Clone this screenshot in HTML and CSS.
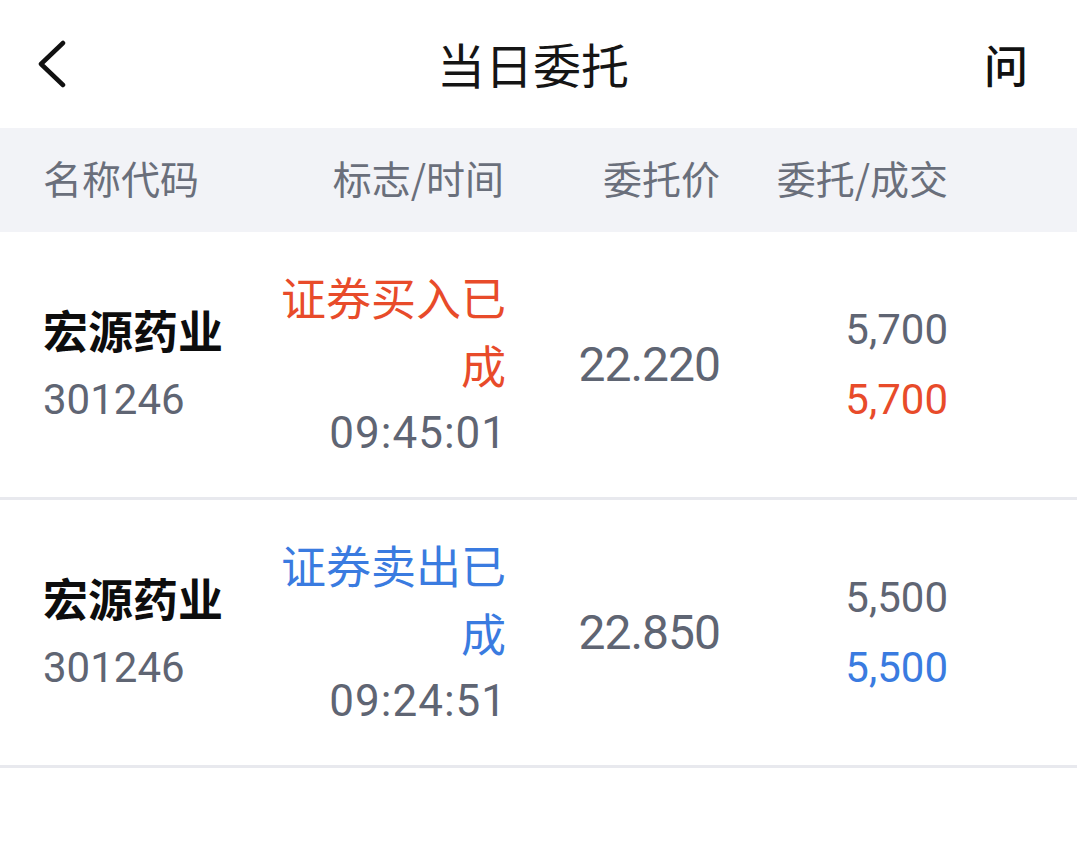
FILE: index.html
```html
<!DOCTYPE html>
<html lang="zh-CN">
<head>
<meta charset="utf-8">
<title>当日委托</title>
<link rel="stylesheet" href="styles.css">
</head>
<body>
<div class="page">
  <header class="topbar">
    <div class="back">
      <svg width="30" height="48" viewBox="0 0 30 48"><path d="M25 3 L3 24 L25 45" fill="none" stroke="#111" stroke-width="4.5" stroke-linecap="round" stroke-linejoin="round"/></svg>
    </div>
    <div class="title">当日委托</div>
    <div class="help">问</div>
  </header>
  <div class="thead">
    <div class="c1">名称代码</div>
    <div class="c2">标志/时间</div>
    <div class="c3">委托价</div>
    <div class="c4">委托/成交</div>
  </div>
  <div class="row">
    <div class="c1 namecell">
      <div class="name">宏源药业</div>
      <div class="code">301246</div>
    </div>
    <div class="c2 statuscell">
      <div class="status buy">证券买入已成</div>
      <div class="time">09:45:01</div>
    </div>
    <div class="c3 price">22.220</div>
    <div class="c4 qtycell">
      <div class="qty">5,700</div>
      <div class="qty buy">5,700</div>
    </div>
  </div>
  <div class="row">
    <div class="c1 namecell">
      <div class="name">宏源药业</div>
      <div class="code">301246</div>
    </div>
    <div class="c2 statuscell">
      <div class="status sell">证券卖出已成</div>
      <div class="time">09:24:51</div>
    </div>
    <div class="c3 price">22.850</div>
    <div class="c4 qtycell">
      <div class="qty">5,500</div>
      <div class="qty sell">5,500</div>
    </div>
  </div>
</div>
</body>
</html>
```

FILE: styles.css
```css
* { box-sizing: border-box; margin: 0; padding: 0; }
html, body { background: #fff; }
body {
  font-family: Roboto, "Noto Sans CJK SC", sans-serif;
  color: #111;
  width: 1077px;
}
.topbar {
  height: 128px;
  display: grid;
  grid-template-columns: 1fr auto 1fr;
  align-items: center;
  padding: 0 49px 0 38px;
}
.back { display: flex; align-items: center; }
.back svg { display: block; }
.title {
  font-family: "Noto Sans CJK SC", sans-serif;
  font-size: 48px;
  line-height: 60px;
  color: #151515;
  font-weight: 400;
  padding-bottom: 2px;
}
.help {
  justify-self: end;
  font-family: "Noto Sans CJK SC", sans-serif;
  font-size: 44px;
  line-height: 60px;
  color: #111;
  font-weight: 500;
}
.thead, .row {
  display: grid;
  grid-template-columns: 233px 228px 216px 228px;
  padding-left: 43px;
}
.thead {
  height: 104px;
  background: #f2f3f7;
  align-items: center;
  font-family: "Noto Sans CJK SC", sans-serif;
  font-size: 39px;
  line-height: 50px;
  color: #6a6f7b;
  padding-bottom: 6px;
}
.c1 { text-align: left; }
.c2, .c3, .c4 { text-align: right; }
.row {
  height: 268px;
  border-bottom: 3px solid #e8e9ee;
  align-items: center;
}
.name {
  font-family: "Noto Sans CJK SC", sans-serif;
  font-weight: 700;
  font-size: 45px;
  line-height: 70px;
  color: #0d0d0d;
}
.code {
  font-size: 42px;
  line-height: 70px;
  color: #5f6573;
}
.status {
  font-family: "Noto Sans CJK SC", sans-serif;
  font-size: 45px;
  line-height: 68px;
  margin-right: -2px;
}
.time {
  font-size: 44px;
  line-height: 68px;
  color: #5f6573;
  letter-spacing: 1px;
  margin-right: -3px;
}
.buy { color: #e84b2a; }
.sell { color: #3a7be0; }
.price {
  font-size: 48px;
  line-height: 70px;
  color: #5f6573;
  letter-spacing: -1px;
}
.qty {
  font-size: 42px;
  line-height: 70px;
  color: #5f6573;
}
.qty.buy { color: #e84b2a; }
.qty.sell { color: #3a7be0; }
```
